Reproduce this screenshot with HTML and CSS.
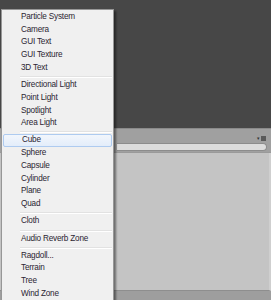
FILE: index.html
```html
<!DOCTYPE html>
<html lang="en">
<head>
    <meta charset="UTF-8">
    <title>Create Other</title>
    <link rel="stylesheet" href="styles.css">
</head>
<body>

    <div class="scene"></div>

    <div class="panel">
        <div class="panel-head">
            <span class="panel-menu">&#9662;<i></i></span>
        </div>
        <div class="search-row">
            <div class="search"></div>
        </div>
        <div class="panel-body"></div>
        <div class="panel-foot"></div>
    </div>

    <div class="menu">
        <div class="item">Particle System</div>
        <div class="item">Camera</div>
        <div class="item">GUI Text</div>
        <div class="item">GUI Texture</div>
        <div class="item">3D Text</div>
        <div class="sep"></div>
        <div class="item">Directional Light</div>
        <div class="item">Point Light</div>
        <div class="item">Spotlight</div>
        <div class="item">Area Light</div>
        <div class="sep"></div>
        <div class="item active">Cube</div>
        <div class="item">Sphere</div>
        <div class="item">Capsule</div>
        <div class="item">Cylinder</div>
        <div class="item">Plane</div>
        <div class="item">Quad</div>
        <div class="sep"></div>
        <div class="item">Cloth</div>
        <div class="sep"></div>
        <div class="item">Audio Reverb Zone</div>
        <div class="sep"></div>
        <div class="item">Ragdoll...</div>
        <div class="item">Terrain</div>
        <div class="item">Tree</div>
        <div class="item">Wind Zone</div>
    </div>

</body>
</html>
```

FILE: styles.css
```css
html, body {
    margin: 0;
    height: 100%;
    overflow: hidden;
}

body {
    font-family: "Liberation Sans", Arial, sans-serif;
    background-color: #474747;
    display: flex;
    flex-direction: column;
}

.scene {
    height: 128px;
    flex: none;
    background-color: #474747;
}

.panel {
    flex: 1;
    display: flex;
    flex-direction: column;
    background-color: #a0a0a0;
    border-top: 1px solid #8a8a8a;
}

.panel-head {
    height: 12px;
    display: flex;
    justify-content: flex-end;
    align-items: flex-end;
    padding-right: 5px;
}

.panel-menu {
    font-size: 5px;
    color: #333;
    display: flex;
    align-items: center;
    gap: 1px;
    line-height: 1;
}

.panel-menu i {
    display: block;
    width: 5px;
    height: 5px;
    background-color: #5a5a5a;
}

.search-row {
    padding: 2px 4px 1px 117px;
    border-bottom: 1px solid #9a9a9a;
}

.search {
    height: 6px;
    background-color: #dcdcdc;
    border: 1px solid #8c8c8c;
    border-left: none;
    border-radius: 0 5px 5px 0;
}

.panel-body {
    flex: none;
    height: 137px;
    background-color: #c4c4c4;
    border-right: 2px solid #cfcfcf;
    border-bottom: 1px solid #8e8e8e;
}

.panel-foot {
    flex: 1;
    background-color: #9e9e9e;
}

.menu {
    position: absolute;
    top: 9px;
    left: 1px;
    width: 111px;
    padding: 1px 0 1px;
    background-color: #f0f0f0;
    border: 1px solid #979797;
    box-shadow: 2px 2px 2px rgba(0, 0, 0, 0.45);
}

.item {
    height: 12.72px;
    line-height: 12.72px;
    padding-left: 19px;
    font-size: 8.2px;
    letter-spacing: -0.2px;
    color: #2b2532;
    white-space: nowrap;
    box-sizing: border-box;
}

.item.active {
    margin: 0 1px;
    padding-left: 18px;
    background: linear-gradient(#f2f6fc, #e3edfa);
    border: 1px solid #aecbf0;
    border-radius: 2px;
    line-height: 10.72px;
}

.sep {
    height: 1px;
    margin: 1.5px 1px 1px 18px;
    background-color: #e2e2e2;
    border-bottom: 1px solid #fff;
}
```
